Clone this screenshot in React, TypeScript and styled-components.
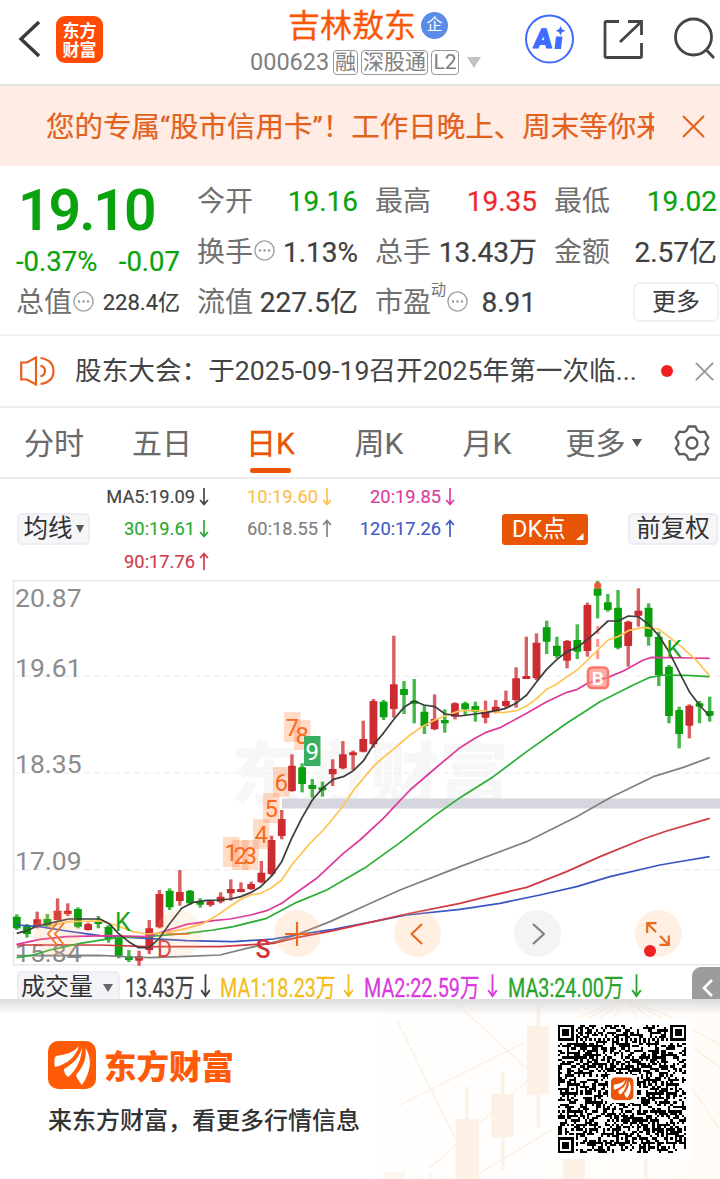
import React from 'react';
import styled, { createGlobalStyle } from 'styled-components';

const Global = createGlobalStyle`
  * { box-sizing: border-box; }
  body { margin: 0; background: #fff; font-family: Roboto, "Noto Sans CJK SC", sans-serif; color: #444; }
  svg { display: block; flex: none; }
`;

const GREEN = '#0aa30e';
const RED = '#f0282d';
const ORANGE = '#ea5504';

const Page = styled.main`
  width: 720px;
  height: 1179px;
  overflow: hidden;
  display: flex;
  flex-direction: column;
`;

/* ---------- header ---------- */
const Header = styled.header`
  height: 86px;
  flex: none;
  border-bottom: 2px solid #e6e2e0;
  display: grid;
  grid-template-columns: 240px 250px 230px;
`;
const HeaderLeft = styled.div`
  display: flex;
  align-items: center;
  gap: 16px;
  padding: 0 0 6px 18px;
`;
const AppBadge = styled.div`
  width: 47px;
  height: 47px;
  border-radius: 9px;
  background: #ff4b05;
  color: #fff;
  font: 700 17px/19px "Noto Sans CJK SC", sans-serif;
  text-align: center;
  padding-top: 4px;
`;
const HeaderMid = styled.div`
  display: flex;
  flex-direction: column;
  padding-left: 10px;
`;
const StockName = styled.h1`
  margin: 0;
  padding: 5px 0 0 38px;
  display: flex;
  align-items: center;
  gap: 5px;
  height: 46px;
  font-size: 32px;
  font-weight: 400;
  line-height: 42px;
  color: #fb5708;
  -webkit-text-stroke: 0.3px #fb5708;
`;
const CorpBadge = styled.span`
  width: 27px;
  height: 27px;
  border-radius: 50%;
  background: #5a8be6;
  color: #fff;
  font-size: 16px;
  line-height: 26px;
  text-align: center;
  -webkit-text-stroke: 0;
`;
const CodeRow = styled.div`
  display: flex;
  align-items: center;
  height: 32px;
  color: #808080;
  font-size: 23.5px;
  white-space: nowrap;
`;
const Code = styled.span`
  width: 83px;
`;
const Tag = styled.span<{ $w: number }>`
  width: ${p => p.$w}px;
  height: 25px;
  margin-right: 3px;
  border: 1.5px solid #999;
  border-radius: 4px;
  font-size: 21px;
  line-height: 22px;
  display: flex;
  justify-content: center;
`;
const Triangle = styled.i<{ $w: number; $h: number; $c: string; $m?: string }>`
  width: 0;
  height: 0;
  flex: none;
  border: solid transparent;
  border-width: ${p => p.$h}px ${p => p.$w / 2}px 0;
  border-top-color: ${p => p.$c};
  margin: ${p => p.$m || '0'};
`;
const HeaderRight = styled.div`
  display: flex;
  align-items: center;
  padding: 0 0 6px 34px;
  gap: 27px;
`;

/* ---------- banner ---------- */
const Banner = styled.section`
  height: 80px;
  flex: none;
  background: #ffece4;
  display: flex;
  align-items: center;
  padding: 1px 0 0 46px;
  color: #e2611c;
`;
const BannerText = styled.div`
  width: 608px;
  margin: 2px 28px 0 0;
  overflow: hidden;
  white-space: nowrap;
  font-size: 28.5px;
  line-height: 42px;
  -webkit-text-stroke: 0.2px #e2611c;
`;

/* ---------- quote ---------- */
const Quote = styled.section`
  height: 170px;
  flex: none;
  border-bottom: 2px solid #f2f2f2;
  display: grid;
  grid-template-columns: 164px 161px 162px 164px;
  column-gap: 17px;
  padding: 11px 0 0 16px;
  font-size: 28px;
  white-space: nowrap;
`;
const QuoteCol = styled.div`
  display: flex;
  flex-direction: column;
`;
const Cell = styled.div`
  height: 50.5px;
  display: flex;
  align-items: center;
  justify-content: space-between;
  line-height: 42px;
`;
const Label = styled.span`
  color: #707070;
  display: flex;
  align-items: center;
`;
const Value = styled.span<{ $c?: string; $size?: number; $mr?: number }>`
  color: ${p => p.$c || '#404040'};
  font-size: ${p => p.$size || 28}px;
  margin-right: ${p => p.$mr || 0}px;
  -webkit-text-stroke: 0.2px ${p => p.$c || '#404040'};
`;
const BigPrice = styled.div`
  height: 66px;
  padding-left: 2px;
  font-size: 57px;
  line-height: 67px;
  letter-spacing: -2px;
  font-weight: 600;
  color: ${GREEN};
`;
const Change = styled.div`
  height: 35px;
  line-height: 37px;
  font-size: 27.5px;
  display: flex;
  justify-content: space-between;
  color: ${GREEN};
  -webkit-text-stroke: 0.2px ${GREEN};
`;
const Dyn = styled.sup`
  font-size: 15px;
  line-height: 15px;
  align-self: flex-start;
  margin: 1px 0 0 0;
`;
const MoreButton = styled.button`
  width: 86px;
  height: 40px;
  margin: -2px -1px 0 auto;
  border: 2px solid #f1f1f4;
  border-radius: 7px;
  background: #fff;
  color: #3c3c3c;
  font: 24px/32px Roboto, "Noto Sans CJK SC", sans-serif;
  padding: 0;
`;

/* ---------- notice ---------- */
const Notice = styled.section`
  height: 72px;
  flex: none;
  border-bottom: 2px solid #ececec;
  display: flex;
  align-items: center;
  padding-left: 20px;
`;
const NoticeText = styled.div`
  width: 606px;
  flex: none;
  padding-left: 20px;
  font-size: 26.65px;
  line-height: 40px;
  color: #444;
  white-space: nowrap;
`;
const Dot = styled.i`
  width: 12px;
  height: 12px;
  border-radius: 50%;
  background: #f0201e;
  margin-right: 22px;
`;

/* ---------- tabs ---------- */
const Tabs = styled.nav`
  height: 71px;
  flex: none;
  border-bottom: 2px solid #ececec;
  display: grid;
  grid-template-columns: 108px 108px 109px 108px 108px 125px 54px;
  align-items: center;
`;
const Tab = styled.div<{ $on?: boolean }>`
  height: 69px;
  display: flex;
  flex-direction: column;
  align-items: center;
  padding-top: 14px;
  font-size: 30px;
  line-height: 44px;
  color: ${p => (p.$on ? ORANGE : '#6a6a6a')};
  -webkit-text-stroke: ${p => (p.$on ? '0.3px' : '0.1px')};
`;
const TabLabel = styled.span`
  display: flex;
  align-items: center;
`;
const Underline = styled.i`
  width: 41px;
  height: 5px;
  border-radius: 3px;
  margin-top: 2px;
  background: ${ORANGE};
`;
const GearSlot = styled.div`
  padding-left: 7px;
`;

/* ---------- indicator row ---------- */
const Indicators = styled.section`
  height: 101px;
  flex: none;
  display: grid;
  grid-template-columns: 73px 119px 123px 123px 1fr 90px;
  padding: 1px 2px 2px 17px;
`;
const MaCol = styled.div`
  display: flex;
  flex-direction: column;
  align-items: flex-end;
`;
const MaItem = styled.div<{ $c: string }>`
  height: 32.6px;
  display: flex;
  align-items: center;
  gap: 4px;
  font-size: 18.3px;
  color: ${p => p.$c};
  -webkit-text-stroke: 0.15px ${p => p.$c};
`;
const Chip = styled.div`
  height: 32px;
  margin-top: 33px;
  border: 2px solid #ececf2;
  border-radius: 5px;
  background: #f6f6f9;
  display: flex;
  align-items: center;
  justify-content: center;
  font-size: 24.5px;
  line-height: 28px;
  color: #333;
  white-space: nowrap;
`;
const DkButton = styled.div`
  width: 86px;
  height: 31px;
  margin: 34px 0 0 47px;
  border-radius: 3px;
  background: #e95506;
  color: #fff;
  font-size: 23.5px;
  line-height: 31px;
  padding-left: 10px;
  display: flex;
  justify-content: space-between;
`;

/* ---------- chart ---------- */
const ChartBox = styled.section`
  position: relative;
  height: 386px;
  flex: none;
`;
const RoundButton = styled.div<{ $x: number; $bg: string }>`
  position: absolute;
  left: ${p => p.$x - 23.5}px;
  top: 330px;
  width: 47px;
  height: 47px;
  border-radius: 50%;
  background: ${p => p.$bg};
  display: flex;
  align-items: center;
  justify-content: center;
`;
const RedDot = styled.i`
  position: absolute;
  left: 9px;
  top: 35px;
  width: 12px;
  height: 12px;
  border-radius: 50%;
  background: #ee2420;
`;

/* ---------- volume row ---------- */
const VolumeRow = styled.section`
  height: 33px;
  flex: none;
  overflow: hidden;
  display: flex;
  padding: 1px 0 0 17px;
`;
const VolumeChip = styled.div`
  width: 103px;
  height: 40px;
  margin: 4px 5px 0 0;
  border: 2px solid #ececf2;
  border-radius: 5px;
  background: #f4f4f8;
  display: flex;
  gap: 10px;
  font-size: 24px;
  line-height: 28px;
  color: #333;
  padding-left: 2px;
  white-space: nowrap;
`;
const Vol = styled.div<{ $c: string; $w: number }>`
  width: ${p => p.$w}px;
  color: ${p => p.$c};
  display: flex;
  -webkit-text-stroke: 0.3px ${p => p.$c};
`;
const Narrow = styled.span<{ $w: number }>`
  width: ${p => p.$w}px;
  margin-right: 5px;
  padding-top: 2px;
  font-size: 26px;
  line-height: 38px;
  white-space: nowrap;
  transform: scaleX(0.76);
  transform-origin: 0 50%;
`;
const VolArrow = styled.span`
  padding-top: 6px;
`;
const SideTab = styled.div`
  width: 28px;
  height: 33px;
  margin-left: auto;
  border-radius: 9px 0 0 0;
  background: #9c9b9e;
  display: flex;
  align-items: center;
  justify-content: center;
  padding: 8px 0 0 2px;
`;

/* ---------- footer ---------- */
const Footer = styled.footer`
  position: relative;
  height: 180px;
  flex: none;
  display: flex;
  justify-content: space-between;
  background: linear-gradient(90deg, #fff 50%, #fffcf8 100%);
`;
const Backdrop = styled.svg`
  position: absolute;
  right: 0;
  top: 0;
`;
const Shade = styled.div`
  position: absolute;
  left: 0;
  right: 0;
  top: 0;
  height: 16px;
  background: linear-gradient(#dcdcdc, rgba(240, 240, 240, 0));
`;
const Brand = styled.div`
  position: relative;
  padding: 42px 0 0 48px;
`;
const BrandRow = styled.div`
  display: flex;
  align-items: center;
  gap: 8px;
  font-size: 32.5px;
  line-height: 48px;
  font-weight: 900;
  color: #ff5a0a;
`;
const BrandName = styled.span`
  padding-top: 3px;
  height: 48px;
`;
const Slogan = styled.div`
  margin-top: 14px;
  font-size: 24px;
  line-height: 36px;
  font-weight: 500;
  color: #333;
`;
const QrCard = styled.div`
  position: relative;
  width: 140px;
  height: 140px;
  margin: 20px 28px 0 0;
  background: #fff;
  padding: 6px;
`;

const Arrow = ({ up, h = 19, w = 10 }: { up?: boolean; h?: number; w?: number }) => (
  <svg width={w} height={h} viewBox="0 0 9 19" fill="none" stroke="currentColor" strokeWidth="1.5" preserveAspectRatio="none">
    <path d={up ? 'M4.5 18V1.5M1 6L4.5 1.5L8 6' : 'M4.5 1V17.5M1 13L4.5 17.5L8 13'} />
  </svg>
);

const Ellipsis = () => (
  <svg width="22" height="25" viewBox="-1 0 22 25" fill="#999">
    <circle cx="10.5" cy="10.5" r="9.6" fill="none" stroke="#a0a0a0" strokeWidth="1.4" />
    <circle cx="6" cy="10.5" r="1.2" /><circle cx="10.5" cy="10.5" r="1.2" /><circle cx="15" cy="10.5" r="1.2" />
  </svg>
);

const Cross = ({ size, color, w }: { size: number; color: string; w: number }) => (
  <svg width={size} height={size} viewBox="0 0 22 22" stroke={color} strokeWidth={w}>
    <path d="M1 1L21 21M21 1L1 21" />
  </svg>
);

const Wing = ({ size, bg }: { size: number; bg: string }) => (
  <svg width={size} height={size} viewBox="0 0 48 48">
    <rect width="48" height="48" rx="10" fill={bg} />
    <path fill="#fff" d="M31 5C28 15 20 23 7 26C6 22 6 17 8 15C16 13.500 24 13 31 5ZM34 6C34 17 29 29 20 36C17 34 16 31 16 28C25 23 32 16 34 6ZM37.500 7C44.500 17 43 31 34 44C31 41 29 37 28 34C35 26 39 18 37.500 7Z" />
  </svg>
);

/* high, body top, body bottom, low: thirds of a pixel below y = 570 */
type Candle = [0 | 1, number, number, number, number];
const candles: Candle[] = [
  [0, 1033, 1040, 1075, 1080], [0, 1062, 1068, 1092, 1103], [1, 1025, 1048, 1068, 1075], [0, 1032, 1047, 1068, 1075],
  [1, 985, 1022, 1050, 1052], [1, 1000, 1022, 1032, 1038], [0, 1012, 1017, 1070, 1075], [1, 1058, 1062, 1080, 1082],
  [0, 1038, 1053, 1062, 1075], [0, 1065, 1070, 1108, 1118], [0, 1095, 1100, 1160, 1165], [0, 1140, 1158, 1170, 1176],
  [1, 1142, 1158, 1172, 1187], [1, 1050, 1075, 1140, 1152], [1, 960, 972, 1072, 1075], [0, 955, 962, 1012, 1020],
  [1, 900, 966, 993, 1007], [0, 960, 962, 1000, 1005], [0, 985, 995, 1003, 1013], [1, 990, 994, 1005, 1010],
  [1, 967, 980, 995, 1000], [1, 928, 957, 970, 992], [1, 937, 957, 963, 967], [1, 935, 942, 957, 960],
  [1, 873, 908, 937, 940], [1, 797, 810, 912, 916], [1, 720, 747, 798, 808], [1, 553, 587, 663, 665],
  [0, 580, 592, 642, 667], [0, 627, 645, 657, 683], [0, 635, 652, 658, 680], [1, 568, 597, 613, 648],
  [1, 513, 553, 595, 598], [1, 542, 547, 553, 600], [1, 452, 507, 545, 547], [1, 387, 393, 523, 533],
  [0, 390, 395, 442, 450], [1, 197, 343, 417, 443], [0, 333, 357, 375, 432], [0, 327, 392, 400, 460],
  [0, 405, 425, 468, 492], [1, 373, 447, 478, 480], [0, 418, 450, 460, 488], [1, 397, 400, 440, 448],
  [0, 395, 400, 418, 437], [0, 395, 408, 425, 455], [1, 392, 425, 443, 460], [1, 390, 410, 425, 430],
  [1, 362, 393, 408, 415], [1, 292, 325, 390, 413], [1, 200, 318, 327, 327], [1, 190, 218, 325, 330],
  [0, 152, 172, 215, 252], [0, 200, 227, 258, 265], [1, 210, 213, 272, 295], [0, 163, 210, 245, 267],
  [1, 98, 105, 243, 260], [0, 33, 55, 77, 145], [0, 72, 97, 120, 125], [0, 60, 113, 233, 238],
  [1, 152, 155, 228, 290], [1, 55, 122, 137, 170], [0, 100, 113, 200, 227], [0, 185, 200, 315, 348],
  [0, 285, 290, 438, 460], [0, 410, 420, 492, 535], [1, 403, 407, 467, 505], [0, 393, 400, 410, 460],
  [0, 380, 423, 437, 455],
];

const lines: { color: string; pts: string }[] = [
  { color: '#808080', pts: '50,1157 300,1156 390,1161 450,1163 540,1160 660,1155 740,1135 830,1115 900,1090 990,1055 1100,1005 1200,960 1380,890 1580,815 1730,740 1830,683 1960,620 2050,592 2129,563' },
  { color: '#3a55c4', pts: '50,1065 120,1070 200,1083 300,1097 440,1105 560,1112 700,1115 820,1107 900,1093 1000,1078 1120,1055 1220,1035 1380,1018 1500,1000 1620,975 1730,950 1830,920 1980,885 2050,873 2129,860' },
  { color: '#d03a42', pts: '50,1125 300,1125 440,1130 660,1130 820,1120 890,1103 1000,1082 1120,1055 1220,1032 1380,1000 1440,985 1580,952 1700,905 1800,860 1930,807 2000,783 2129,745' },
  { color: '#2cae36', pts: '50,1163 100,1155 150,1140 240,1120 350,1103 440,1100 560,1090 640,1080 700,1070 800,1045 890,997 980,960 1100,890 1200,818 1300,740 1380,683 1480,620 1580,545 1700,460 1800,395 1900,345 1950,322 1990,315 2060,316 2129,320' },
  { color: '#dd3a9c', pts: '50,1123 120,1108 200,1100 320,1097 440,1100 500,1082 560,1063 640,1052 690,1047 752,1035 800,1022 845,1000 875,978 950,925 1030,850 1080,810 1150,745 1230,660 1300,600 1380,533 1425,505 1456,488 1500,473 1580,430 1640,395 1701,367 1732,358 1763,340 1824,322 1870,303 1930,270 1955,262 2080,264 2129,265' },
  { color: '#ffc553', pts: '142,1070 205,1055 300,1053 345,1065 400,1085 440,1092 500,1088 560,1075 610,1060 650,1037 692,1008 722,988 752,975 782,970 815,953 845,930 875,885 930,820 970,780 1020,720 1065,655 1120,590 1150,562 1190,530 1230,495 1270,468 1300,452 1335,438 1380,422 1440,422 1510,428 1550,422 1580,408 1610,385 1640,358 1671,342 1701,320 1732,300 1763,270 1793,240 1824,210 1854,200 1885,182 1930,172 1977,178 2010,203 2050,235 2090,272 2129,318' },
  { color: '#3d3d3d', pts: '50,1090 81,1082 111,1068 172,1055 205,1047 300,1047 330,1063 355,1090 386,1115 416,1133 447,1133 478,1105 510,1060 545,1015 580,997 620,991 660,990 692,987 722,980 752,968 782,950 815,918 845,875 875,805 905,745 937,690 967,655 1000,628 1030,620 1060,602 1090,573 1120,525 1150,490 1180,450 1212,412 1242,393 1272,405 1305,410 1335,432 1380,438 1425,432 1456,428 1487,422 1518,415 1548,400 1580,375 1610,335 1640,298 1671,268 1701,245 1732,232 1763,208 1793,182 1824,153 1854,153 1885,138 1915,140 1946,163 1977,198 2007,245 2037,305 2068,365 2098,405 2129,438' },
];

const counts: [string, number, number][] = [
  ['1', 223, 837], ['2', 232, 840], ['3', 242, 840], ['4', 253, 819], ['5', 263, 793], ['6', 273, 767], ['7', 284, 712], ['8', 294, 720], ['9', 304, 736],
];

const KChart = () => (
  <svg width="720" height="386" viewBox="0 580 720 386" fontFamily='Roboto, "Noto Sans CJK SC", sans-serif'>
    <text x="231" y="799" fontSize="69.5" fontWeight="900" fill="#f7f7f7">东方财富</text>
    <g stroke="#f1f1f2" strokeWidth="1.5">
      <path d="M13.5 966V580.7H720M13 964.8H720" fill="none" stroke="#e6e8e8" />
      <path d="M14 676.3H720M14 773H720M14 869.7H720" strokeDasharray="6 4" />
    </g>
    <rect x="282" y="798.5" width="438" height="10" fill="#d5d6de" />
    <g fontSize="26.5" fill="#8c8c8c">
      <text x="15" y="607">20.87</text>
      <text x="15" y="677">19.61</text>
      <text x="15" y="773">18.35</text>
      <text x="15" y="870">17.09</text>
      <text x="15" y="962">15.84</text>
    </g>
    {candles.map(([up, h, t, b, l], i) => {
      const x = 16.8 + i * 10.19;
      const c = up ? '#cc2b30' : '#0aa00d';
      return (
        <g key={i} fill={c}>
          <rect x={x - 1.7} y={570 + h / 3} width="3.4" height={(l - h) / 3} fillOpacity="0.75" />
          <rect x={x - 3.9} y={570 + t / 3} width="7.8" height={Math.max(3, (b - t) / 3)} rx="0.6" />
        </g>
      );
    })}
    <circle cx="597.7" cy="585.5" r="3.6" fill="#e65c35" />
    <path d="M597.7 626V634M597.7 639V647M597.7 650V659" stroke="#ff9d95" strokeWidth="3.2" />
    <g transform="translate(0 570) scale(0.33333)" fill="none" strokeWidth="5.2" strokeLinejoin="round">
      {lines.map(l => <polyline key={l.color} points={l.pts} stroke={l.color} />)}
    </g>
    <g fontSize="24" textAnchor="middle">
      {counts.map(([n, x, y]) => (
        <g key={n}>
          <rect x={x} y={y} width="16.5" height="30" rx="1" fill={n === '9' ? '#3aaf62' : '#ff7a33'} fillOpacity={n === '9' ? 1 : 0.27} />
          <text x={x + 8.2} y={y + 23.5} fill={n === '9' ? '#fff' : '#f96a1c'}>{n}</text>
        </g>
      ))}
    </g>
    <g fontSize="25">
      <text x="115" y="931" fill="#17a51b">K</text>
      <text x="666.5" y="657" fill="#17a51b" fontSize="24">K</text>
      <text x="157" y="957" fill="#d53a3a" fontSize="23">D</text>
      <text x="255.5" y="957.5" fill="#d53338" fontWeight="500">S</text>
    </g>
    <rect x="588" y="667.5" width="20" height="20.500" rx="4" fill="#ff8377" fillOpacity="0.65" stroke="#ff7468" strokeWidth="2.5" />
    <text x="597.9" y="684.7" fontSize="19" fontWeight="600" textAnchor="middle" fill="#fff">B</text>
  </svg>
);

const N = 57;
const finder = (r: number, c: number): number | null => {
  for (const [fr, fc] of [[0, 0], [0, N - 7], [N - 7, 0]]) {
    const y = r - fr;
    const x = c - fc;
    if (y >= -1 && y <= 7 && x >= -1 && x <= 7) {
      const d = Math.max(Math.abs(y - 3), Math.abs(x - 3));
      return d === 3 || d <= 1 ? 1 : 0;
    }
  }
  for (const ar of [6, 28, 50]) {
    for (const ac of [6, 28, 50]) {
      const d = Math.max(Math.abs(r - ar), Math.abs(c - ac));
      if (d <= 2 && !(ar === 6 && ac === 50) && !(ar === 50 && ac === 6)) return d === 1 ? 0 : 1;
    }
  }
  if (r === 6 || c === 6) return (r + c + 1) % 2;
  return null;
};
const qrPath = (() => {
  let seed = 90417;
  let d = '';
  for (let r = 0; r < N; r++) {
    for (let c = 0; c < N; c++) {
      seed = (seed * 1103515245 + 12345) % 2147483648;
      const f = finder(r, c);
      if (f === null ? (seed >> 16) % 100 < 50 : f) d += `M${c} ${r}h1v1h-1z`;
    }
  }
  return d;
})();

const Qr = () => (
  <svg width="128" height="128" viewBox="0 0 57 57" shapeRendering="crispEdges">
    <path d={qrPath} fill="#000" />
    <rect x="22.4" y="22.2" width="12.6" height="12.6" fill="#fff" />
    <g transform="translate(23.5 23.3)" shapeRendering="auto"><Wing size={10.2} bg="#e9560b" /></g>
  </svg>
);

const FooterArt = () => (
  <Backdrop width="340" height="180" viewBox="380 999 340 180">
    <g stroke="#fdeee0" strokeWidth="1.300" fill="none">
      <path d="M452 999L530 1072M400 1105L530 1040M397 1020L456 1140M430 1168L530 1078M470 1179L560 1125M576 1018L625 999L674 1018M588 1018L625 999L662 1018M600 1018L625 999L650 1018M613 1018L625 999L637 1018M690 1028L720 1045M690 1045L720 1068M690 1085L720 1130" />
    </g>
    <g fill="#fdf0e4">
      <rect x="455.500" y="1119" width="23.500" height="60" /><rect x="465" y="1087" width="3.500" height="34" />
      <rect x="491.500" y="1094" width="22.500" height="43.500" /><rect x="501" y="1072" width="3.500" height="98" />
      <rect x="527" y="1026" width="22" height="68.500" /><rect x="536.500" y="1007" width="3.500" height="120" />
      <rect x="563" y="1158" width="22" height="21" /><rect x="644" y="1158" width="3.500" height="21" />
      <rect x="384" y="1172" width="22" height="7" opacity=".5" /><rect x="429" y="1172" width="4" height="7" opacity=".5" />
    </g>
  </Backdrop>
);

export default function App() {
  return (
    <Page>
      <Global />
      <Header>
        <HeaderLeft>
          <svg width="22" height="38" viewBox="0 0 22 38" fill="none" stroke="#3a3a3a" strokeWidth="3.4"><path d="M21 2L3 19L21 36" /></svg>
          <AppBadge>东方<br />财富</AppBadge>
        </HeaderLeft>
        <HeaderMid>
          <StockName>吉林敖东<CorpBadge>企</CorpBadge></StockName>
          <CodeRow>
            <Code>000623</Code>
            <Tag $w={25}>融</Tag><Tag $w={67}>深股通</Tag><Tag $w={28}>L2</Tag>
            <Triangle $w={15} $h={11} $c="#c2c2c2" $m="0 0 0 5px" />
          </CodeRow>
        </HeaderMid>
        <HeaderRight>
          <svg width="51" height="50" viewBox="0 0 51 50">
            <circle cx="25.500" cy="25" r="23.500" fill="none" stroke="#3f6bff" strokeWidth="2" />
            <text x="10" y="34.500" fontFamily="Roboto, sans-serif" fontSize="27" fontWeight="900" fill="#3f6bff" stroke="#3f6bff" strokeWidth="1.200" transform="skewX(-5) translate(2 0)">A</text>
            <path d="M32 22.500H38.500L37 35H30.500ZM36.500 12L38 15.300L41.300 16.800L38 18.300L36.500 21.600L35 18.300L31.700 16.800L35 15.300Z" fill="#3f6bff" />
          </svg>
          <svg width="42" height="42" viewBox="0 0 42 42" fill="none" stroke="#454545" strokeWidth="2.800">
            <path d="M17 3.500H4.500Q3 3.500 3 5V38Q3 39.500 4.500 39.500H38Q39.500 39.500 39.500 38V25M26 3.500H39.500V17M39 4L18 24" />
          </svg>
          <svg width="44" height="44" viewBox="0 0 44 44" fill="none" stroke="#454545" strokeWidth="2.800">
            <circle cx="22.500" cy="20" r="18" /><path d="M34.500 32L43 41" />
          </svg>
        </HeaderRight>
      </Header>

      <Banner>
        <BannerText>您的专属“股市信用卡”！工作日晚上、周末等你来</BannerText>
        <Cross size={23} color="#e2611c" w={2} />
      </Banner>

      <Quote>
        <QuoteCol>
          <BigPrice>19.10</BigPrice>
          <Change><span>-0.37%</span><span>-0.07</span></Change>
          <Cell><Label>总值<Ellipsis /></Label><Value $size={22}>228.4亿</Value></Cell>
        </QuoteCol>
        <QuoteCol>
          <Cell><Label>今开</Label><Value $c={GREEN}>19.16</Value></Cell>
          <Cell><Label>换手<Ellipsis /></Label><Value>1.13%</Value></Cell>
          <Cell><Label>流值</Label><Value>227.5亿</Value></Cell>
        </QuoteCol>
        <QuoteCol>
          <Cell><Label>最高</Label><Value $c={RED}>19.35</Value></Cell>
          <Cell><Label>总手</Label><Value>13.43万</Value></Cell>
          <Cell><Label>市盈<Dyn>动</Dyn><Ellipsis /></Label><Value $mr={1}>8.91</Value></Cell>
        </QuoteCol>
        <QuoteCol>
          <Cell><Label>最低</Label><Value $c={GREEN} $mr={1}>19.02</Value></Cell>
          <Cell><Label>金额</Label><Value $mr={1}>2.57亿</Value></Cell>
          <Cell><MoreButton>更多</MoreButton></Cell>
        </QuoteCol>
      </Quote>

      <Notice>
        <svg width="35" height="30" viewBox="0 0 35 30" fill="none" stroke="#e8601f" strokeWidth="2.200">
          <path d="M1.200 6.500H7L16 1.500V28.500L7 23.500H1.200ZM20.500 9.500Q25 11 25 15T20.500 20.500M20.500 2Q33.500 4 33.500 15T20.500 28" />
        </svg>
        <NoticeText>股东大会：于2025-09-19召开2025年第一次临...</NoticeText>
        <Dot />
        <Cross size={19} color="#999" w={2.2} />
      </Notice>

      <Tabs>
        <Tab>分时</Tab>
        <Tab>五日</Tab>
        <Tab $on>日K<Underline /></Tab>
        <Tab>周K</Tab>
        <Tab>月K</Tab>
        <Tab><TabLabel>更多<Triangle $w={10} $h={8} $c="#555" $m="-3px 0 0 6px" /></TabLabel></Tab>
        <GearSlot>
          <svg width="38" height="38" viewBox="-19 -19 38 38" fill="none" stroke="#5e5e5e" strokeWidth="2.300" strokeLinejoin="round">
            <path d="M-3.500 -16.500H3.500L5.300 -12.500L8.300 -10.800L12.800 -11.300L16.300 -5.300L13.700 -1.700V1.700L16.300 5.300L12.800 11.300L8.300 10.800L5.300 12.500L3.500 16.500H-3.500L-5.300 12.500L-8.300 10.800L-12.800 11.300L-16.300 5.300L-13.700 1.700V-1.700L-16.300 -5.300L-12.800 -11.300L-8.300 -10.800L-5.300 -12.500Z" />
            <circle r="5.500" />
          </svg>
        </GearSlot>
      </Tabs>

      <Indicators>
        <Chip>均线<Triangle $w={9} $h={8} $c="#555" $m="0 0 0 3px" /></Chip>
        <MaCol>
          <MaItem $c="#444">MA5:19.09<Arrow /></MaItem>
          <MaItem $c="#2aa930">30:19.61<Arrow /></MaItem>
          <MaItem $c="#cf3b48">90:17.76<Arrow up /></MaItem>
        </MaCol>
        <MaCol>
          <MaItem $c="#fdc04a">10:19.60<Arrow /></MaItem>
          <MaItem $c="#808080">60:18.55<Arrow up /></MaItem>
        </MaCol>
        <MaCol>
          <MaItem $c="#dc3c9c">20:19.85<Arrow /></MaItem>
          <MaItem $c="#4059c6">120:17.26<Arrow up /></MaItem>
        </MaCol>
        <DkButton>
          DK点
          <svg width="12" height="27" viewBox="0 0 12 27"><path d="M7.500 19V26H0Z" fill="#fff" /></svg>
        </DkButton>
        <Chip>前复权</Chip>
      </Indicators>

      <ChartBox>
        <KChart />
        <RoundButton $x={57} $bg="rgba(255,178,110,.18)">
          <svg width="20" height="24" viewBox="0 0 20 24" fill="none" stroke="#f0742a" strokeWidth="1.800"><path d="M10 1L1 12L10 23M17 1L8 12L17 23" /></svg>
        </RoundButton>
        <RoundButton $x={178} $bg="rgba(255,178,110,.15)">
          <svg width="22" height="2" viewBox="0 0 22 2"><path d="M0 1H22" stroke="#f0742a" strokeWidth="1.500" /></svg>
        </RoundButton>
        <RoundButton $x={297} $bg="rgba(255,178,110,.2)">
          <svg width="24" height="24" viewBox="0 0 24 24" stroke="#ec6a20" strokeWidth="2.200"><path d="M12 0V24M0 12H24" /></svg>
        </RoundButton>
        <RoundButton $x={417} $bg="rgba(255,178,110,.2)">
          <svg width="14" height="22" viewBox="0 0 14 22" fill="none" stroke="#ec6a20" strokeWidth="2.200"><path d="M12 1L1.500 11L12 21" /></svg>
        </RoundButton>
        <RoundButton $x={537.5} $bg="#f6f3f6">
          <svg width="14" height="22" viewBox="0 0 14 22" fill="none" stroke="#808080" strokeWidth="2.200"><path d="M2 1L13 11L2 21" /></svg>
        </RoundButton>
        <RoundButton $x={658} $bg="#fff0e3">
          <svg width="24" height="24" viewBox="0 0 24 24" fill="none" stroke="#ec6a20" strokeWidth="2.200"><path d="M10.500 1.200H1.200V11M1.500 1.500L10 10M22.800 13.500V22.800H13.500M14 14L22.500 22.500" /></svg>
          <RedDot />
        </RoundButton>
      </ChartBox>

      <VolumeRow>
        <VolumeChip>成交量<Triangle $w={10} $h={8} $c="#666" $m="11px 0 0" /></VolumeChip>
        <Vol $c="#444" $w={95}><Narrow $w={70}>13.43万</Narrow><VolArrow><Arrow w={11} h={25} /></VolArrow></Vol>
        <Vol $c="#f2bd1d" $w={144}><Narrow $w={118}>MA1:18.23万</Narrow><VolArrow><Arrow w={11} h={25} /></VolArrow></Vol>
        <Vol $c="#d93bdc" $w={144}><Narrow $w={118}>MA2:22.59万</Narrow><VolArrow><Arrow w={11} h={25} /></VolArrow></Vol>
        <Vol $c="#2aa32d" $w={144}><Narrow $w={118}>MA3:24.00万</Narrow><VolArrow><Arrow w={11} h={25} /></VolArrow></Vol>
        <SideTab>
          <svg width="11" height="18" viewBox="0 0 11 18" fill="none" stroke="#fff" strokeWidth="2.600"><path d="M10 1L2 9L10 17" /></svg>
        </SideTab>
      </VolumeRow>

      <Footer>
        <FooterArt />
        <Shade />
        <Brand>
          <BrandRow><Wing size={48} bg="#ff5a05" /><BrandName>东方财富</BrandName></BrandRow>
          <Slogan>来东方财富，看更多行情信息</Slogan>
        </Brand>
        <QrCard><Qr /></QrCard>
      </Footer>
    </Page>
  );
}
